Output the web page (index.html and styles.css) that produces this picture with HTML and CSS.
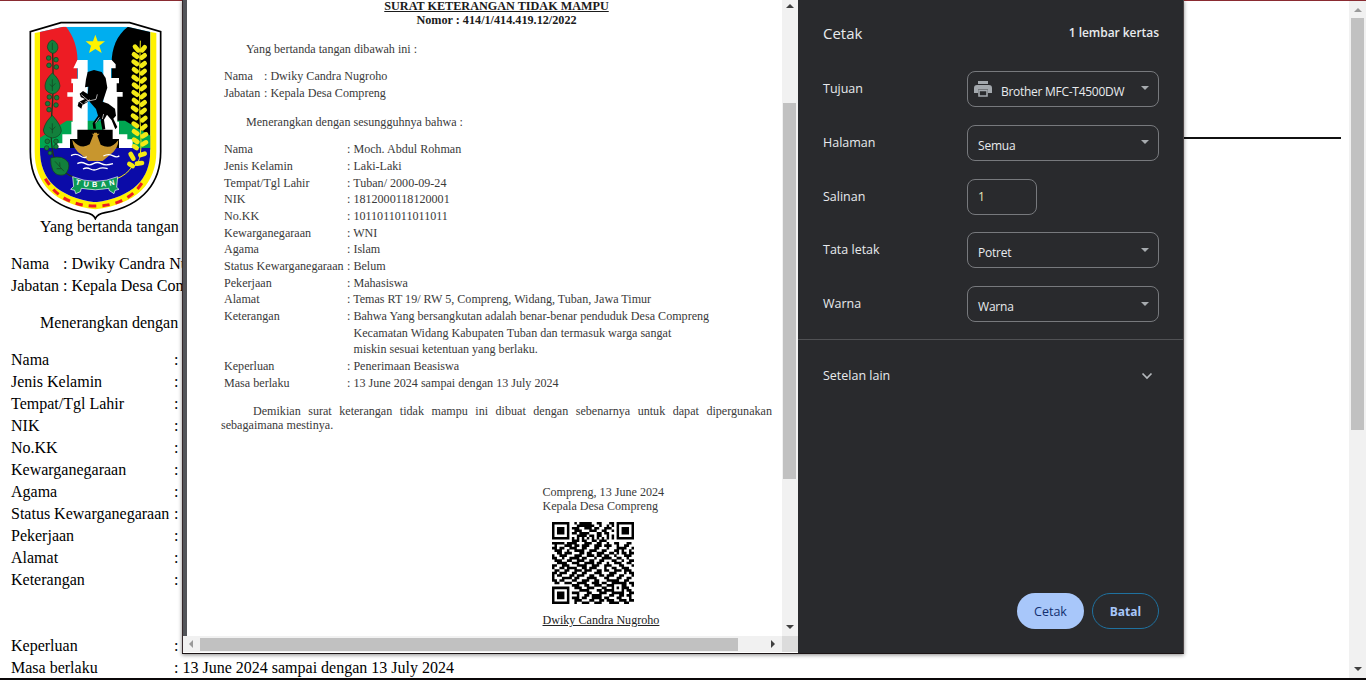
FILE: index.html
```html
<!DOCTYPE html>
<html lang="id">
<head>
<meta charset="utf-8">
<title>Surat Keterangan Tidak Mampu</title>
<link rel="stylesheet" href="styles.css">
</head>
<body>
<div class="window">
  <main class="page">
    <header class="kop">
      <svg class="logo" viewBox="84 60 402 600">
        <path d="M183 68H389L482 95V455C482 545 432 616 315 638Q292 642 286 656Q280 642 257 638C140 616 91 545 91 455V95Z" fill="#fff" stroke="#000" stroke-width="5"/>
        <path d="M120 96L120 450C120 538 172 590 286 607C400 590 451 538 451 450V96L469 99V455C469 550 410 612 286 628C162 612 104 550 104 455V99Z" fill="#fff200"/>
        <clipPath id="field"><path d="M120 96L190 80H382L451 96V450C451 538 400 590 286 607C172 590 120 538 120 450Z"/></clipPath>
        <g clip-path="url(#field)">
          <path d="M110 70H460V450H110Z" fill="#00aeef"/>
          <path d="M110 70H190C222 105 235 150 232 190V390L110 450Z" fill="#ed1c24"/>
          <path d="M384 70H460V450L335 390V190C335 145 350 105 384 80Z" fill="#000"/>
          <path d="M110 420L200 362H375L460 412V450H110Z" fill="#00a651"/>
          <path d="M232 180H263V390H310V180H335L347 193V205H333V234H357V250H350V276H368V290H352V365H357V403H382V418H398V445H171V430H187V403H214V365H218V290H202V277H219V250H214V236H234V205H220Z" fill="#fff"/>
          <path d="M232 389H338V417H357V446H210V417H232Z" fill="#000"/>
          <path d="M110 444H460V620H110Z" fill="#0b0ba8"/>
        </g>
        <path d="M286 104L293 124H315L298 137L305 159L286 147L267 159L273 137L257 124H279Z" fill="#fff200"/>
        <path d="M258 238L263 216L282 210L305 216L317 234L322 263L314 288L308 305L325 311L345 326L348 347L340 356L352 381L346 388L335 361L321 344L312 359L316 388L307 389L301 356L286 371L288 386H280L278 370L294 347L288 327L267 303L247 316L244 326L233 318L236 306L255 297L242 291L239 281L249 273L263 282L265 260L255 262Z" fill="#000"/>
        <path d="M240 287L237 304L251 315M244 284L266 303L288 298L292 283M254 307L270 299M286 370L298 352M307 357L311 342" fill="none" stroke="#fff" stroke-width="2"/>
        <path d="M217 419Q242 451 269 433L280 405L275 401H282V398H291V401H299L292 407L302 434Q332 452 355 420Q355 447 330 464L308 483H265L243 463Q219 447 217 419Z" fill="#c8962e"/>
        <path d="M213 467Q228 459 241 468T260 470M310 468Q325 460 338 467T358 467M232 491Q244 484 256 491T280 491T304 491T339 491M249 507Q260 501 271 507T294 507T323 506" fill="none" stroke="#fff" stroke-width="4"/>
        <path d="M157 135Q162 260 156 330T157 450Q165 510 222 532" fill="none" stroke="#21351b" stroke-width="4"/>
        <g fill="#12803c" stroke="#143d1e" stroke-width="2">
          <path d="M156 120Q174 126 174 144Q170 160 157 160Q143 154 142 140Q143 126 156 120ZM157 219Q178 236 180 258Q177 278 157 282Q134 276 135 257Q136 238 157 219ZM157 346Q184 376 184 393Q180 411 158 414Q132 410 130 390Q136 364 157 346ZM152 474Q190 464 205 488Q211 507 194 524Q170 530 159 512Q151 496 152 474Z"/>
          <circle cx="146" cy="174" r="7"/><circle cx="168" cy="179" r="7"/><circle cx="147" cy="196" r="7"/><circle cx="169" cy="201" r="7"/>
          <circle cx="148" cy="291" r="7"/><circle cx="170" cy="293" r="7"/><circle cx="143" cy="311" r="7"/><circle cx="168" cy="315" r="7"/><circle cx="147" cy="329" r="7"/>
          <circle cx="142" cy="424" r="7"/><circle cx="168" cy="424" r="7"/><circle cx="140" cy="444" r="7"/><circle cx="168" cy="440" r="7"/><circle cx="150" cy="459" r="6"/>
          <path d="M157 150V128M157 273V238M157 400V370M149 382L157 390L166 380M149 253L157 260L166 250M192 514L165 484M180 500L179 487M184 506L170 506" fill="none"/>
        </g>
        <g fill="none" stroke="#f3ea15">
          <path d="M421 122Q416 300 422 400T396 500Q380 525 348 537" stroke-width="3"/>
          <path d="M405 140L414 151M402 163L411 170M401 185L411 192M402 208L410 214M401 231L411 238M402 254L411 261M401 277L411 284M402 300L411 307M399 323L409 330M399 347L409 354M401 371L411 378M402 394L412 401M402 419L412 426M402 439L410 444M392 462L400 476M388 492L398 498M434 142L426 151M434 166L425 173M434 190L425 197M434 213L425 220M434 237L425 244M434 260L425 267M434 284L425 291M434 307L425 314M434 330L425 337M436 354L427 361M436 378L427 385M438 403L428 409M438 427L428 433M434 461L421 465M426 489L411 491" stroke-width="14" stroke-linecap="round"/>
        </g>
        <path d="M136 536Q184 618 286 618Q388 618 434 536" fill="none" stroke="#ed1c24" stroke-width="9" stroke-dasharray="22 18"/>
        <path d="M218 530Q286 558 353 530L350 562L357 568L345 571L342 581L327 571V565Q286 574 244 565L241 575L227 581L224 571L212 568L221 559Z" fill="#0c9a55" stroke="#fff" stroke-width="2"/>
        <path id="ribbon" d="M226 553Q286 570 350 552" fill="none"/>
        <text class="ribbon-text"><textPath href="#ribbon" textLength="120">TUBAN</textPath></text>
      </svg>
      <div class="rule"></div>
    </header>
    <p class="opening">Yang bertanda tangan</p>
    <div class="rows signer">
      <span>Nama</span><span>: Dwiky Candra Nu</span>
      <span>Jabatan</span><span>: Kepala Desa Com</span>
    </div>
    <p>Menerangkan dengan</p>
    <div class="rows">
      <span>Nama</span><span>:</span>
      <span>Jenis Kelamin</span><span>:</span>
      <span>Tempat/Tgl Lahir</span><span>:</span>
      <span>NIK</span><span>:</span>
      <span>No.KK</span><span>:</span>
      <span>Kewarganegaraan</span><span>:</span>
      <span>Agama</span><span>:</span>
      <span>Status Kewarganegaraan</span><span>:</span>
      <span>Pekerjaan</span><span>:</span>
      <span>Alamat</span><span>:</span>
      <span class="tall">Keterangan</span><span>:</span>
      <span>Keperluan</span><span>:</span>
      <span>Masa berlaku</span><span>: 13 June 2024 sampai dengan 13 July 2024</span>
    </div>
  </main>
  <div class="scrollbar page-scroll"><i class="arrow up dim"></i><div class="thumb"></div><i class="arrow down"></i></div>
</div>
<div class="taskbar-edge"></div>

<section class="dialog">
  <div class="preview">
    <div class="preview-main">
      <div class="paper">
        <h1>SURAT KETERANGAN TIDAK MAMPU</h1>
        <h2>Nomor : 414/1/414.419.12/2022</h2>
        <p class="indent first">Yang bertanda tangan dibawah ini :</p>
        <div class="prow signer">
          <span>Nama</span><span>: Dwiky Candra Nugroho</span>
          <span>Jabatan</span><span>: Kepala Desa Compreng</span>
        </div>
        <p class="indent">Menerangkan dengan sesungguhnya bahwa :</p>
        <div class="prow">
          <span>Nama</span><span>: Moch. Abdul Rohman</span>
          <span>Jenis Kelamin</span><span>: Laki-Laki</span>
          <span>Tempat/Tgl Lahir</span><span>: Tuban/ 2000-09-24</span>
          <span>NIK</span><span>: 1812000118120001</span>
          <span>No.KK</span><span>: 1011011011011011</span>
          <span>Kewarganegaraan</span><span>: WNI</span>
          <span>Agama</span><span>: Islam</span>
          <span>Status Kewarganegaraan</span><span>: Belum</span>
          <span>Pekerjaan</span><span>: Mahasiswa</span>
          <span>Alamat</span><span>: Temas RT 19/ RW 5, Compreng, Widang, Tuban, Jawa Timur</span>
          <span>Keterangan</span><span>: Bahwa Yang bersangkutan adalah benar-benar penduduk Desa Compreng</span>
          <span></span><span class="cont">Kecamatan Widang Kabupaten Tuban dan termasuk warga sangat</span>
          <span></span><span class="cont">miskin sesuai ketentuan yang berlaku.</span>
          <span>Keperluan</span><span>: Penerimaan Beasiswa</span>
          <span>Masa berlaku</span><span>: 13 June 2024 sampai dengan 13 July 2024</span>
        </div>
        <p class="closing">Demikian surat keterangan tidak mampu ini dibuat dengan sebenarnya untuk dapat dipergunakan sebagaimana mestinya.</p>
        <div class="signature">
          <div>Compreng, 13 June 2024</div>
          <div>Kepala Desa Compreng</div>
          <svg class="qr" viewBox="0 0 33 33"><path id="qr"/></svg>
          <div><u>Dwiky Candra Nugroho</u></div>
        </div>
      </div>
      <div class="scrollbar preview-v"><i class="arrow up"></i><div class="thumb"></div><i class="arrow down"></i></div>
    </div>
    <div class="preview-h"><i class="arrow left dim"></i><div class="thumb"></div><i class="arrow right"></i><div class="corner"></div></div>
  </div>
  <aside class="settings">
    <div class="title"><span>Cetak</span><b>1 lembar kertas</b></div>
    <div class="field"><label>Tujuan</label><div class="select printer">
      <svg viewBox="0 0 18 16" width="18" height="16"><path d="M4 0H14V3H4ZM3 4H15Q18 4 18 7V12H14V8.500H4V12H0V7Q0 4 3 4Z" fill="#a3a8ad"/><path d="M5 9.500H13V15H5Z" fill="#292a2d" stroke="#a3a8ad" stroke-width="1.600"/></svg>
      <span>Brother MFC-T4500DW</span><i class="caret"></i></div></div>
    <div class="field"><label>Halaman</label><div class="select"><span>Semua</span><i class="caret"></i></div></div>
    <div class="field"><label>Salinan</label><div class="select copies"><span>1</span></div></div>
    <div class="field"><label>Tata letak</label><div class="select"><span>Potret</span><i class="caret"></i></div></div>
    <div class="field"><label>Warna</label><div class="select"><span>Warna</span><i class="caret"></i></div></div>
    <div class="more"><span>Setelan lain</span><svg viewBox="0 0 12 8" width="12" height="8"><path d="M1.500 1.500L6 6L10.500 1.500" fill="none" stroke="#b4b8bc" stroke-width="1.700"/></svg></div>
    <div class="actions"><button class="primary">Cetak</button><button class="cancel">Batal</button></div>
  </aside>
</section>
<script src="script.js"></script>
</body>
</html>
```
FILE: styles.css
```css
* { box-sizing: border-box; }
body { margin: 0; width: 1366px; height: 680px; overflow: hidden; background: #fff; color: #000; font: 16px/22px "Liberation Serif", serif; position: relative; }
p, h1, h2 { margin: 0; }
.window { display: flex; height: 678px; border-top: 1px solid #8a2b31; overflow: hidden; }
.taskbar-edge { height: 2px; background: #0b0809; }
.page { flex: 1; padding-left: 11px; white-space: nowrap; overflow: hidden; }
.page p { padding-left: 29px; height: 22px; }
.kop { display: flex; height: 199px; padding: 19px 8px 0 17px; }
.logo { width: 134px; height: 200px; flex: none; }
.ribbon-text { font: bold 22px "Liberation Sans", sans-serif; fill: #fff; }
.rule { flex: 1; height: 2px; margin: 117px 0 0 60px; background: #111; }
.page .opening { margin-top: 16px; }
.rows { display: grid; grid-template-columns: 163px auto; grid-auto-rows: minmax(22px, auto); margin-top: 15px; }
.rows.signer { grid-template-columns: 52px auto; margin: 15px 0; }
.tall { height: 66px; }

.scrollbar { display: flex; flex-direction: column; align-items: center; background: #f1f1f1; }
.thumb { background: #c1c1c1; }
.arrow { width: 0; height: 0; border: 4px solid transparent; color: #404040; flex: none; }
.arrow.dim { color: #9a9a9a; }
.up { border-top: 0; border-bottom-color: currentColor; }
.down { border-bottom: 0; border-top-color: currentColor; }
.left { border-left: 0; border-right-color: currentColor; }
.right { border-right: 0; border-left-color: currentColor; }
.page-scroll { width: 17px; padding: 7px 0; }
.page-scroll .thumb { width: 13px; height: 412px; margin-top: 6px; }
.scrollbar .down { margin-top: auto; }

.dialog { position: absolute; left: 182px; top: 0; width: 1002px; height: 654px; display: flex; background: #292a2d; border-bottom: 1px solid #1b1415; border-right: 1px solid #4c4647; box-shadow: 0 1px 4px #0007; }
.preview { width: 616px; height: 653px; background: #f1f1f1; border-left: 1px solid #35282b; }
.preview-main { display: flex; height: 636px; }
.paper { width: 599px; padding-left: 37px; border-left: 4px solid #525459; background: #fff; color: #3a3a3a; font-size: 12.100px; line-height: 14px; overflow: hidden; white-space: nowrap; }
.paper h1, .paper h2 { font-size: 12.200px; line-height: 14px; text-align: center; color: #1b1b1b; width: 545px; }
.paper h1 { text-decoration: underline; margin-top: -1px; }
.indent { padding-left: 22px; margin-top: 13.500px; }
.indent.first { margin-top: 15px; }
.prow { display: grid; grid-template-columns: 123px auto; grid-auto-rows: 16.670px; line-height: 16.670px; margin-top: 12px; }
.prow.signer { grid-template-columns: 40px auto; }
.indent + .prow { margin-top: 12.300px; }
.cont { padding-left: 6.500px; }
.closing { width: 551px; margin: 12.700px 0 0 -3px; text-indent: 32px; text-align: justify; white-space: normal; }
.signature { margin: 53px 0 0 318.500px; }
.signature u { color: #222; }
.qr { display: block; width: 82px; height: 82px; margin: 9px 0 9px 9.500px; }
#qr { fill: #000; }
.preview-v { width: 15px; padding: 4px 0 7px; }
.preview-v .thumb { width: 13px; height: 376px; margin-top: 95px; }
.preview-h { display: flex; align-items: center; height: 17px; border-bottom: 1px solid #fff; }
.preview-h .left { margin: 0 7px 0 6px; }
.preview-h .thumb { width: 538px; height: 13px; }
.preview-h .right { margin-left: 33px; }
.corner { width: 16px; height: 16px; margin-left: auto; background: #dcdcdc; }

.settings { flex: 1; display: flex; flex-direction: column; color: #e8eaed; font: 12.500px/18px "Open Sans", sans-serif; }
.title { display: flex; justify-content: space-between; align-items: center; height: 62px; padding: 4px 24px 0 25px; font-size: 15px; }
.title b { font-size: 12px; font-weight: 600; letter-spacing: -.05px; }
.field { display: flex; align-items: center; height: 53.850px; padding: 0 24px 0 25px; }
.field label { width: 144px; }
.select { width: 192px; height: 36px; border: 1px solid #77797d; border-radius: 8px; display: flex; align-items: center; padding: 6px 9px 0 10px; font-size: 12px; letter-spacing: -.2px; white-space: nowrap; }
.select.printer { padding-left: 6px; letter-spacing: -.28px; }
.printer svg { margin: -6px 9px 0 0; }
.copies { width: 70px; padding-top: 1px; color: #e9e6b8; }
.caret { margin: -7px 0 0 auto; border: 4px solid transparent; border-top-color: #a7abaf; border-bottom: 0; }
.more { display: flex; align-items: center; justify-content: space-between; height: 72px; margin-top: 8px; padding: 0 30px 0 25px; border-top: 1px solid #505154; }
.actions { display: flex; justify-content: flex-end; gap: 8px; margin: auto 24px 24px; }
.actions button { width: 67px; height: 36px; border: 0; border-radius: 18px; font: 500 12.500px "Open Sans", sans-serif; padding: 0; }
.primary { background: #a8c7fa; color: #123070; }
.actions .cancel { background: transparent; border: 1px solid #1f719f; color: #a8c7fa; font-weight: 700; font-size: 12px; }
```
FILE: script.js
```js
// Module rows of the signature QR code, 1 = dark.
const rows = [
  "111111100101111100110001101111111",
  "100000100011111110010010101000001",
  "101110101110011101100111001011101",
  "101110100111000111001100101011101",
  "101110101101111000110110001011101",
  "100000100011110110110010101000001",
  "111111101010101010101010101111111",
  "000000001110110011011100000000000",
  "111110111100011100110010011000110",
  "010001110110111001110111001001100",
  "110110011100110001100010001111001",
  "011100100111100111001100011010010",
  "001101110001101100111001101011011",
  "100111000111001110110110010001110",
  "110010011110110001001111001100100",
  "011100110011100110011000110010011",
  "001111001110011110110010011100110",
  "110011100011110011100111000110001",
  "100110111100110111000100110011100",
  "011001100111011100110110011101110",
  "110111001100110001110001110001011",
  "101100011011100110011011100110001",
  "100011110110001111000110001100110",
  "110110001100111001100011111001100",
  "011001110011110011101100111111011",
  "000000001110011001110011100011001",
  "111111100111001110001100101011100",
  "100000100001111000110111100010110",
  "101110101110001100011100111110011",
  "101110100010011011110001100110110",
  "101110101110110011110110001100010",
  "100000100111000110011011100111011",
  "111111100100111001110001111001100"
];
document.getElementById("qr").setAttribute("d", rows.map((row, y) =>
  row.replace(/1+/g, (run, x) => run && `M${x} ${y}h${run.length}v1.05h-${run.length}z`).replace(/0/g, c => c)
).map((_, y) => [...rows[y].matchAll(/1+/g)].map(r =>
  `M${r.index} ${y}h${r[0].length}v1.05h-${r[0].length}z`).join("")).join(""));
```
